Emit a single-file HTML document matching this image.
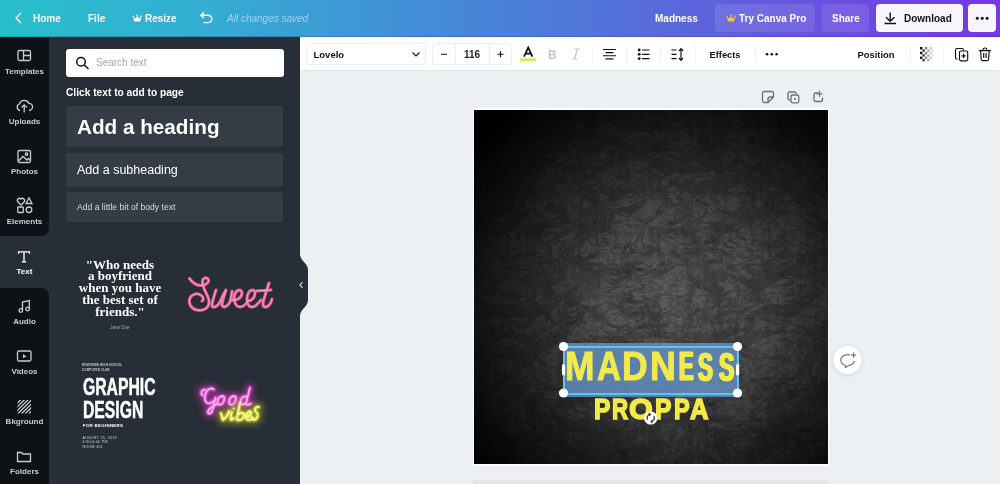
<!DOCTYPE html>
<html><head><meta charset="utf-8">
<style>
*{box-sizing:border-box;margin:0;padding:0}
html,body{width:1000px;height:484px;overflow:hidden;background:#ecf0f3;font-family:"Liberation Sans",sans-serif}
.a{position:absolute;white-space:nowrap}
svg{position:absolute;overflow:visible}
#top{position:absolute;left:0;top:0;width:1000px;height:37px;background:linear-gradient(90deg,#28bfcc 0%,#34aed3 20%,#4290d6 40%,#5273d9 60%,#6755df 80%,#7437e6 100%)}
#top .t{position:absolute;top:13px;font-size:10px;font-weight:bold;color:#fff;line-height:12px}
.btn{position:absolute;top:4px;height:28px;border-radius:4px}
#rail{position:absolute;left:0;top:37px;width:49px;height:447px;background:#0e1217}
.ri{position:absolute;left:0;width:49px;text-align:center;font-size:8px;font-weight:bold;color:#c9ccd0;line-height:9px}
#panel{position:absolute;left:49px;top:37px;width:251px;height:447px;background:#282e37}
#tb{position:absolute;left:300px;top:37px;width:700px;height:32.5px;background:#fff;box-shadow:0 0.5px 1px rgba(0,0,0,0.06)}
.tbt{position:absolute;top:12px;font-size:9.5px;font-weight:bold;color:#0e1318;line-height:12px}
.div{position:absolute;top:8px;width:1px;height:18px;background:#f0f1f3}
.lt{position:absolute;font-weight:bold;color:#f1ea4c;transform-origin:0 0;white-space:nowrap}
.card{position:absolute;left:66px;width:217px;background:#363c45;border-radius:3px}
</style></head><body>
<!-- TOP BAR -->
<div id="top">
  <svg style="left:0;top:0" width="1000" height="37">
    <path d="M21 13 L16 18 L21 23" fill="none" stroke="#fff" stroke-width="1.4"/>
    <path d="M134.2 21.5 L133.2 16.8 L135.6 18.6 L137.2 15.8 L138.8 18.6 L141.2 16.8 L140.2 21.5 Z" fill="#fff"/><circle cx="133.2" cy="16.4" r="0.8" fill="#fff"/><circle cx="137.2" cy="15.4" r="0.8" fill="#fff"/><circle cx="141.2" cy="16.4" r="0.8" fill="#fff"/>
    <path d="M204 12.2 L200.9 15.2 L204 18.2 M201.2 15.2 H207.8 A3.9 3.7 0 0 1 207.8 22.6 H203.6" fill="none" stroke="#fff" stroke-width="1.4"/>
    <path d="M728 21.5 L727 16.8 L729.4 18.6 L731 15.8 L732.6 18.6 L735 16.8 L734 21.5 Z" fill="#f6b93b"/><circle cx="727" cy="16.4" r="0.8" fill="#f6b93b"/><circle cx="731" cy="15.4" r="0.8" fill="#f6b93b"/><circle cx="735" cy="16.4" r="0.8" fill="#f6b93b"/>
    <path d="M890.2 12.5 L890.2 21 M886 17.3 L890.2 21.3 L894.4 17.3 M884.5 23.5 L896 23.5" fill="none" stroke="#0e1318" stroke-width="1.4"/>
    <circle cx="977.3" cy="18.2" r="1.5" fill="#0e1318"/><circle cx="982.2" cy="18.2" r="1.5" fill="#0e1318"/><circle cx="987.1" cy="18.2" r="1.5" fill="#0e1318"/>
  </svg>
  <span class="t" style="left:33px">Home</span>
  <span class="t" style="left:88px">File</span>
  <span class="t" style="left:145px">Resize</span>
  <span class="t" style="left:227px;font-style:italic;font-weight:normal;color:rgba(255,255,255,0.5)">All changes saved</span>
  <span class="t" style="left:655px">Madness</span>
  <div class="btn" style="left:715px;width:100px;background:rgba(255,255,255,0.1)"></div>
  <span class="t" style="left:739px">Try Canva Pro</span>
  <div class="btn" style="left:822px;width:47px;background:rgba(255,255,255,0.1)"></div>
  <span class="t" style="left:832px">Share</span>
  <div class="btn" style="left:876px;width:87px;background:#f8f6fc"></div>
  <span class="t" style="left:904px;color:#0e1318">Download</span>
  <div class="btn" style="left:968px;width:28px;background:#f8f6fc"></div>
  <svg style="left:0;top:0" width="1000" height="37">
    <path d="M890.2 12.5 L890.2 21 M886 17.3 L890.2 21.3 L894.4 17.3 M884.5 23.5 L896 23.5" fill="none" stroke="#0e1318" stroke-width="1.4"/>
    <circle cx="977.3" cy="18.2" r="1.5" fill="#0e1318"/><circle cx="982.2" cy="18.2" r="1.5" fill="#0e1318"/><circle cx="987.1" cy="18.2" r="1.5" fill="#0e1318"/>
  </svg>
</div>

<div style="position:absolute;left:0;top:36px;width:1000px;height:1px;background:rgba(20,10,60,0.18)"></div>
<!-- RAIL -->
<div id="rail">
  <div style="position:absolute;left:0;top:150px;width:49px;height:150px;background:#282e37"></div>
  <div style="position:absolute;left:0;top:150px;width:49px;height:49px;background:#0e1217;border-bottom-right-radius:8px"></div>
  <div style="position:absolute;left:0;top:251px;width:49px;height:49px;background:#0e1217;border-top-right-radius:8px"></div>
</div>
<div class="ri" style="top:67px">Templates</div>
<div class="ri" style="top:117px">Uploads</div>
<div class="ri" style="top:167px">Photos</div>
<div class="ri" style="top:217px">Elements</div>
<div class="ri" style="top:267px;color:#fff">Text</div>
<div class="ri" style="top:317px">Audio</div>
<div class="ri" style="top:367px">Videos</div>
<div class="ri" style="top:417px">Bkground</div>
<div class="ri" style="top:467px">Folders</div>
<svg style="left:0;top:0" width="49" height="484" fill="none" stroke="#c9ccd0" stroke-width="1.3">
  <!-- templates -->
  <rect x="18" y="50.5" width="12.5" height="10" rx="1.5"/>
  <path d="M23.5 50.5 V60.5 M23.5 55.5 H30.5"/>
  <!-- uploads -->
  <path d="M20 110.5 A3.5 3.5 0 0 1 19.5 103.8 A5 5 0 0 1 28.8 103.3 A3.5 3.5 0 0 1 29 110.5"/>
  <path d="M24.2 112.5 V105 M21.5 107.5 L24.2 104.8 L27 107.5"/>
  <!-- photos -->
  <rect x="18" y="150.5" width="12.5" height="12" rx="1.5"/>
  <path d="M18.5 161 L23 156.5 L27 160 L28.5 158.5 L30.5 160.5"/>
  <circle cx="26.5" cy="154.2" r="1.2"/>
  <!-- elements -->
  <path d="M21 205 L18 202 A2 2 0 0 1 21 199 A2 2 0 0 1 24 202 Z"/>
  <path d="M29 197.8 L32 203.5 L26 203.5 Z"/>
  <rect x="17.8" y="207" width="5.5" height="5.5" rx="0.5"/>
  <circle cx="29" cy="209.8" r="2.8"/>
  <!-- audio -->
  <path d="M22.5 310 V302 L29.3 300.5 V308.5"/>
  <circle cx="20.8" cy="310.5" r="1.8"/><circle cx="27.6" cy="309" r="1.8"/>
  <!-- videos -->
  <rect x="17.5" y="351" width="13.5" height="10" rx="1.5"/>
  <!-- folders -->
  <path d="M17.5 452.5 H21.5 L23 454 H30.5 V461.5 H17.5 Z"/>
</svg>
<svg style="left:0;top:0" width="49" height="484">
  <path d="M23 354.3 L26.5 356.3 L23 358.3 Z" fill="#c9ccd0"/>
  <!-- text T -->
  <path d="M18.6 253.8 V251.8 H29.4 V253.8 M24 251.8 V261.8 M21.8 261.8 H26.2" fill="none" stroke="#fff" stroke-width="1.3"/>
  <!-- bkground stripes -->
  <g stroke="#c9ccd0" stroke-width="1.3">
    <clipPath id="bk"><rect x="17.5" y="400" width="13.5" height="13.5"/></clipPath>
    <g clip-path="url(#bk)"><path d="M6.5 414 L21.5 399 M10.2 414 L25.2 399 M13.9 414 L28.9 399 M17.6 414 L32.6 399 M21.3 414 L36.3 399 M25.0 414 L40.0 399 M28.7 414 L43.7 399"/></g>
  </g>
</svg>

<!-- PANEL -->
<div id="panel"></div>
<div style="position:absolute;left:66px;top:49px;width:218px;height:28px;background:#fff;border-radius:3px"></div>
<svg style="left:0;top:0" width="300" height="100">
  <circle cx="81" cy="61.7" r="4.3" fill="none" stroke="#0e1318" stroke-width="1.5"/>
  <path d="M84.2 65 L88.5 69" stroke="#0e1318" stroke-width="1.6"/>
</svg>
<span class="a" style="left:96px;top:57px;font-size:10px;color:#a4a8ad;line-height:12px">Search text</span>
<span class="a" style="left:66px;top:87px;font-size:10.2px;font-weight:bold;color:#fff;line-height:12px">Click text to add to page</span>
<div class="card" style="top:106px;height:41px"></div>
<div class="card" style="top:153px;height:34px"></div>
<div class="card" style="top:192px;height:30px"></div>
<span class="a" style="left:77px;top:115px;font-size:20.7px;font-weight:bold;color:#fff;line-height:24px">Add a heading</span>
<span class="a" style="left:77px;top:162.5px;font-size:12.5px;color:#fff;line-height:15px">Add a subheading</span>
<span class="a" style="left:77px;top:202px;font-size:8.6px;color:#d8dadd;line-height:11px">Add a little bit of body text</span>

<!-- templates previews -->
<div class="a" style="left:60px;top:258.6px;width:120px;text-align:center;font-family:'Liberation Serif',serif;font-weight:bold;font-size:13px;line-height:11.8px;color:#fff">"Who needs<br>a boyfriend<br>when you have<br>the best set of<br>friends."</div>
<div class="a" style="left:60px;top:325px;width:120px;text-align:center;font-size:4.5px;color:#aab;line-height:6px">Jane Doe</div>

<!-- right templates -->
<svg style="left:0;top:0" width="300" height="484" fill="none" stroke-linecap="round" stroke-linejoin="round">
  <defs>
    <filter id="gl" x="-50%" y="-50%" width="200%" height="200%"><feGaussianBlur stdDeviation="3"/></filter>
    <filter id="gl2" x="-50%" y="-50%" width="200%" height="200%"><feGaussianBlur stdDeviation="1.2"/></filter>
    <path id="sw" d="M189.5 278.5 C192 282 196 285.5 201 285.5 C206 285.5 210 282 208 279 C206 276.5 202 278 202.5 283 C203 290 210 297 209 303 C208 309 203 311 197 310 C191 309 188 303 190 298 C192 294 198 292 202 296 C204 298 203 301 202 301 M216 290 C214 296 212 302 212 306 C213 309 218 306 220 302 C222 297 224 293 226 290 C224 296 222 302 222 305 C223 309 228 306 230 302 C231 298 232 294 232 291 M232 300 C236 301 242 298 242 293 C242 289 237 289 235 294 C233 299 235 307 240 307 C243 307 246 304 248 301 C251 301 255 298 255 293 C255 289 250 289 248 294 C246 299 247 307 252 307 C256 307 258 303 261 300 M269 283 C267 290 263 300 263 304 C263 308 267 308 270 304 C271 302 272 300 272 299 M256 291 L271 290"/>
    <path id="gd" d="M202.5 395.5 C200 393 201.5 389.5 205 389.5 M214 389.5 C210.5 386.5 206 390 205 396.5 C204 402.5 209 406 213.5 401 M215.5 397.5 L212.5 410 C211.5 414.5 207 415 208 411 C209 408 213 406 217.5 404 M224.5 397 C221 394.5 217.5 398 217.5 402 C217.5 405.5 222 405.5 223.5 402 C225 399 224.5 396.5 222.5 396 M236 397 C232.5 394.5 229 398 229 402 C229 405.5 233.5 405.5 235 402 C236.5 399 236 396.5 234 396 M247.5 397.5 C244 394.5 240.5 398 240.5 402 C240.5 405.5 245 405.5 246.5 401.5 L250 387.5 M246.5 401.5 C245.5 405 247 406 251 403.5"/>
    <path id="vb" d="M221 413 C222 416 222 419 223 420 C225 419 228 415 229 411 M232 412 C231 415 230 419 231 420 C232 420 233 419 234 418 M233.5 408.5 L233.6 408.6 M240 403 C239 408 237 415 237 420 C240 421 244 419 244 415 C244 412 240 412 238 415 M246 417 C249 417 252 414 251 412 C249 410 246 413 246 417 C246 421 250 421 253 418 M259 407 C255 406 254 410 256 412 C259 414 258 419 254 420 C252 420 251 418 252 417"/>
  </defs>
  <use href="#sw" stroke="#ec5f9c" stroke-width="3.1"/>
  <use href="#sw" stroke="#ffb5d6" stroke-width="1" opacity="0.75"/>
  <use href="#gd" stroke="#d030b8" stroke-width="8" filter="url(#gl)" opacity="0.6"/>
  <use href="#vb" stroke="#a8a820" stroke-width="9" filter="url(#gl)" opacity="0.6"/>
  <use href="#gd" stroke="#ff62e6" stroke-width="2.8" filter="url(#gl2)"/>
  <use href="#vb" stroke="#eef04a" stroke-width="2.8" filter="url(#gl2)"/>
  <use href="#gd" stroke="#ffb8f4" stroke-width="1.5"/>
  <use href="#vb" stroke="#fbfd9c" stroke-width="1.5"/>
</svg>
<!-- graphic design -->
<div class="a" style="left:82px;top:362.5px;font-size:3px;font-weight:bold;color:#c8cacd;line-height:5.2px;letter-spacing:0.1px">RIVERSIDE HIGH SCHOOL<br>COMPUTER CLUB</div>
<div class="a" style="left:82.5px;top:376.2px;font-size:23.3px;font-weight:bold;color:#fff;line-height:23.2px;transform:scaleX(0.675);transform-origin:0 0;-webkit-text-stroke:0.5px #fff">GRAPHIC<br>DESIGN</div>
<div class="a" style="left:82.8px;top:422.8px;font-size:4.4px;font-weight:bold;color:#fff;line-height:6px;letter-spacing:0.3px">FOR BEGINNERS</div>
<div class="a" style="left:82.5px;top:435.5px;font-size:3.6px;color:#d0d2d5;line-height:4.5px;letter-spacing:0.3px">AUGUST 25, 2019<br>4:30-6:00 PM<br>ROOM 301</div>
<!-- collapse handle -->
<svg style="left:0;top:0" width="320" height="484">
  <path d="M300 254 Q300 258 304 262 Q308 266 308 270 V300 Q308 304 304 308 Q300 312 300 316 Z" fill="#282e37"/>
  <path d="M302.5 282 L300 285 L302.5 288" fill="none" stroke="#e6e8ea" stroke-width="1.1"/>
</svg>

<!-- TOOLBAR -->
<div id="tb">
  <div style="position:absolute;left:6px;top:6px;width:120px;height:22px;border:1px solid #eceef1;border-radius:3px"></div>
  <span class="tbt" style="left:13.5px">Lovelo</span>
  <div style="position:absolute;left:132px;top:6px;width:80px;height:22px;border:1px solid #eceef1;border-radius:3px"></div>
  <div style="position:absolute;left:155px;top:6px;width:1px;height:22px;background:#eceef1"></div>
  <div style="position:absolute;left:189px;top:6px;width:1px;height:22px;background:#eceef1"></div>
  <span class="tbt" style="left:164px;top:11.5px;font-size:10px;font-weight:bold;color:#1c2126">116</span>
  <span class="tbt" style="left:409.5px;font-size:9.3px">Effects</span>
  <span class="tbt" style="left:557.5px;font-size:9.4px">Position</span>
  <div class="div" style="left:292px"></div>
  <div class="div" style="left:326px"></div>
  <div class="div" style="left:360px"></div>
  <div class="div" style="left:395px"></div>
  <div class="div" style="left:455px"></div>
  <div class="div" style="left:610px"></div>
  <div class="div" style="left:643px"></div>
</div>
<svg style="left:0;top:0" width="1000" height="80" fill="none" stroke="#0e1318" stroke-width="1.15">
  <path d="M412.5 52.5 L416 56 L419.5 52.5"/>
  <path d="M441 54.2 H447 M497.5 54.2 H503.5 M500.5 51.2 V57.2"/>
  <path d="M603 49.5 H616 M605.5 52.6 H613.5 M603 55.7 H616 M605.5 58.8 H613.5"/>
  <path d="M642 50 H649.5 M642 54.3 H649.5 M642 58.6 H649.5"/>
  <path d="M671.5 50 H676.5 M671.5 54.3 H676.5 M671.5 58.6 H676.5 M681 49 V60 M679 51 L681 48.7 L683 51 M679 58 L681 60.3 L683 58"/>
  <!-- duplicate -->
  <path d="M957.5 59 H957 A1.5 1.5 0 0 1 955.5 57.5 V50 A1.5 1.5 0 0 1 957 48.5 H962 A1.5 1.5 0 0 1 963.5 50 V50.5"/>
  <rect x="959.5" y="51" width="8.2" height="9.8" rx="1.5"/>
  <path d="M963.6 53.8 V58 M961.5 55.9 H965.7" stroke-width="1.3"/>
  <!-- trash -->
  <path d="M978.8 50.6 H991 M983 50.6 V49.8 A1.8 1.8 0 0 1 984.8 48 H985 A1.8 1.8 0 0 1 986.8 49.8 V50.6 M980.6 50.6 L981.2 59 A1.6 1.6 0 0 0 982.8 60.6 H987 A1.6 1.6 0 0 0 988.6 59 L989.2 50.6 M983.7 53 V58 M986.1 53 V58"/>
</svg>
<svg style="left:0;top:0" width="1000" height="80">
  <path d="M524 56.6 L528.2 47.6 L532.4 56.6 M525.5 53.6 H531" fill="none" stroke="#0e1318" stroke-width="1.8"/>
  <rect x="520" y="58.2" width="16" height="3.2" rx="1.4" fill="#e6e55a"/>
  <text x="548" y="59" font-family="Liberation Sans" font-weight="bold" font-size="12" fill="#c4c7cb">B</text>
  <path d="M574.5 49 H580 M572 59 H577.5 M577.3 49 L574.7 59" fill="none" stroke="#c4c7cb" stroke-width="1.2"/>
  <circle cx="639.2" cy="50" r="1.4" fill="#0e1318"/><circle cx="639.2" cy="54.3" r="1.4" fill="#0e1318"/><circle cx="639.2" cy="58.6" r="1.4" fill="#0e1318"/>
  <circle cx="767" cy="54.3" r="1.3" fill="#0e1318"/><circle cx="771.8" cy="54.3" r="1.3" fill="#0e1318"/><circle cx="776.6" cy="54.3" r="1.3" fill="#0e1318"/>
  <!-- checker -->
  <g fill="#0e1318">
    <rect x="920" y="47" width="2.4" height="2.4"/><rect x="924.8" y="47" width="2.4" height="2.4" opacity="0.5"/><rect x="929.6" y="47" width="2.4" height="2.4" opacity="0.2"/>
    <rect x="922.4" y="49.4" width="2.4" height="2.4" opacity="0.8"/><rect x="927.2" y="49.4" width="2.4" height="2.4" opacity="0.35"/><rect x="932" y="49.4" width="1.5" height="2.4" opacity="0.15"/>
    <rect x="920" y="51.8" width="2.4" height="2.4"/><rect x="924.8" y="51.8" width="2.4" height="2.4" opacity="0.5"/><rect x="929.6" y="51.8" width="2.4" height="2.4" opacity="0.2"/>
    <rect x="922.4" y="54.2" width="2.4" height="2.4" opacity="0.8"/><rect x="927.2" y="54.2" width="2.4" height="2.4" opacity="0.35"/><rect x="932" y="54.2" width="1.5" height="2.4" opacity="0.15"/>
    <rect x="920" y="56.6" width="2.4" height="2.4"/><rect x="924.8" y="56.6" width="2.4" height="2.4" opacity="0.5"/><rect x="929.6" y="56.6" width="2.4" height="2.4" opacity="0.2"/>
    <rect x="922.4" y="59" width="2.4" height="2.4" opacity="0.8"/><rect x="927.2" y="59" width="2.4" height="2.4" opacity="0.35"/>
  </g>
</svg>

<!-- CANVAS -->
<div style="position:absolute;left:473px;top:108px;width:356px;height:358px;background:#fff"></div>
<div style="position:absolute;left:473px;top:479.5px;width:356px;height:10px;background:#e3e6e9"></div>
<svg style="left:474px;top:110px" width="354" height="354">
  <defs>
    <radialGradient id="vmask" cx="0.57" cy="0.56" r="0.72">
      <stop offset="0" stop-color="#fff"/>
      <stop offset="0.35" stop-color="#d6d6d6"/>
      <stop offset="0.62" stop-color="#6c6c6c"/>
      <stop offset="0.85" stop-color="#222"/>
      <stop offset="1" stop-color="#000"/>
    </radialGradient>
    <filter id="tx" x="0" y="0" width="100%" height="100%">
      <feTurbulence type="turbulence" baseFrequency="0.008 0.012" numOctaves="6" seed="4"/>
      <feColorMatrix type="luminanceToAlpha"/>
      <feSpecularLighting lighting-color="#fff" surfaceScale="20" specularConstant="0.9" specularExponent="12"><feDistantLight azimuth="225" elevation="55"/></feSpecularLighting>
    </filter>
    <filter id="tx2" x="0" y="0" width="100%" height="100%">
      <feTurbulence type="fractalNoise" baseFrequency="0.015" numOctaves="6" seed="9"/>
      <feColorMatrix type="luminanceToAlpha"/>
      <feDiffuseLighting lighting-color="#fff" surfaceScale="14" diffuseConstant="1"><feDistantLight azimuth="135" elevation="45"/></feDiffuseLighting>
    </filter>
  </defs>
  <rect width="354" height="354" fill="#2e2e2e"/>
  <rect width="354" height="354" filter="url(#tx2)" style="mix-blend-mode:overlay" opacity="0.6"/>
  <rect width="354" height="354" filter="url(#tx)" style="mix-blend-mode:screen" opacity="0.16"/>
  <rect width="354" height="354" fill="url(#vmask)" style="mix-blend-mode:multiply"/>
</svg>
<!-- selection -->
<div style="position:absolute;left:564px;top:342.5px;width:173px;height:54px;background:rgba(102,152,212,0.74)"></div>
<div style="position:absolute;left:562.5px;top:345.5px;width:176px;height:49px;border:2px solid #5cc6ec"></div>
<div class="lt" style="left:564.81px;top:344.30px;font-size:40px;line-height:44.00px;-webkit-text-stroke:1.0px #f1ea4c;transform:scaleX(0.8828)">M</div>
<div class="lt" style="left:596.79px;top:344.30px;font-size:40px;line-height:44.00px;-webkit-text-stroke:1.0px #f1ea4c;transform:scaleX(0.8283)">A</div>
<div class="lt" style="left:622.41px;top:344.30px;font-size:40px;line-height:44.00px;-webkit-text-stroke:1.0px #f1ea4c;transform:scaleX(0.8863)">D</div>
<div class="lt" style="left:649.59px;top:344.30px;font-size:40px;line-height:44.00px;-webkit-text-stroke:1.0px #f1ea4c;transform:scaleX(0.8939)">N</div>
<div class="lt" style="left:679.29px;top:344.30px;font-size:40px;line-height:44px;-webkit-text-stroke:1px #f1ea4c;text-shadow:1.8px 0 0 #f1ea4c,-1.8px 0 0 #f1ea4c,0.9px 0 0 #f1ea4c,-0.9px 0 0 #f1ea4c;transform:scaleX(0.5448)">E</div>
<div class="lt" style="left:698.48px;top:344.50px;font-size:40px;line-height:44px;-webkit-text-stroke:1px #f1ea4c;text-shadow:1.8px 0 0 #f1ea4c,-1.8px 0 0 #f1ea4c,0.9px 0 0 #f1ea4c,-0.9px 0 0 #f1ea4c;transform:scaleX(0.5527)">S</div>
<div class="lt" style="left:719.29px;top:344.50px;font-size:40px;line-height:44px;-webkit-text-stroke:1px #f1ea4c;text-shadow:1.8px 0 0 #f1ea4c,-1.8px 0 0 #f1ea4c,0.9px 0 0 #f1ea4c,-0.9px 0 0 #f1ea4c;transform:scaleX(0.5709)">S</div>
<div class="lt" style="left:593.65px;top:393.05px;font-size:29.4px;line-height:32.34px;-webkit-text-stroke:1.6px #f1ea4c;transform:scaleX(0.834)">P</div>
<div class="lt" style="left:612.06px;top:393.05px;font-size:29.4px;line-height:32.34px;-webkit-text-stroke:1.6px #f1ea4c;transform:scaleX(0.76)">R</div>
<div class="lt" style="left:629.42px;top:393.30px;font-size:29.4px;line-height:32.34px;-webkit-text-stroke:1.6px #f1ea4c;transform:scaleX(1.035)">O</div>
<div class="lt" style="left:654.65px;top:393.05px;font-size:29.4px;line-height:32.34px;-webkit-text-stroke:1.6px #f1ea4c;transform:scaleX(0.834)">P</div>
<div class="lt" style="left:674.20px;top:393.05px;font-size:29.4px;line-height:32.34px;-webkit-text-stroke:1.6px #f1ea4c;transform:scaleX(0.8)">P</div>
<div class="lt" style="left:690.00px;top:393.05px;font-size:29.4px;line-height:32.34px;-webkit-text-stroke:1.6px #f1ea4c;transform:scaleX(0.871)">A</div>
<svg style="left:0;top:0" width="1000" height="484">
  <g fill="#fff">
    <circle cx="563.5" cy="346.5" r="4.6"/><circle cx="737.5" cy="346.5" r="4.6"/>
    <circle cx="563.5" cy="393" r="4.6"/><circle cx="737.5" cy="393" r="4.6"/>
    <rect x="562" y="364" width="3.2" height="11.5" rx="1.6"/><rect x="736" y="364" width="3.2" height="11.5" rx="1.6"/>
    <circle cx="650.7" cy="418" r="6.6"/>
  </g>
  <path d="M650.1 414.4 A3.6 3.6 0 0 0 647.6 419.8 M651.3 421.6 A3.6 3.6 0 0 0 653.8 416.2" fill="none" stroke="#333" stroke-width="1.3"/><path d="M648.8 413 L650.4 414.4 L648.8 415.9 M652.6 423 L651 421.6 L652.6 420.1" fill="none" stroke="#333" stroke-width="1.1"/>
  <!-- page icons -->
  <g fill="none" stroke="#6b7075" stroke-width="1.3" stroke-linejoin="round">
    <path d="M768 102.5 H764.5 A2 2 0 0 1 762.5 100.5 V93.5 A2 2 0 0 1 764.5 91.5 H771.5 A2 2 0 0 1 773.5 93.5 V97 Z M768 102.5 V99 A2 2 0 0 1 770 97 H773.5"/>
    <path d="M790.5 100 H789.5 A1.5 1.5 0 0 1 788 98.5 V93.5 A1.5 1.5 0 0 1 789.5 92 H794.5 A1.5 1.5 0 0 1 796 93.5 V94"/>
    <rect x="791" y="95" width="7.8" height="7.8" rx="1.5"/>
    <path d="M818 93 H815.5 A1.5 1.5 0 0 0 814 94.5 V100 A1.5 1.5 0 0 0 815.5 101.5 H821 A1.5 1.5 0 0 0 822.5 100 V97.5 M819.5 90.8 V96.8 M816.5 93.8 H822.5"/>
  </g>
  <circle cx="794.9" cy="98.9" r="1" fill="#6b7075"/>
  <!-- comment btn -->
  <circle cx="847.5" cy="360" r="14" fill="#fff" style="filter:drop-shadow(0 1px 2px rgba(0,0,0,0.12))"/>
  <path d="M850 354.9 A7 5.5 0 1 0 845.3 365.3 L845.5 367.6 L848.6 365.4 A7 5.5 0 0 0 854.4 360.8" fill="none" stroke="#707579" stroke-width="1.2" stroke-linejoin="round"/>
  <path d="M853.6 352.5 V357.7 M851 355.1 H856.2" fill="none" stroke="#707579" stroke-width="1.2"/>
</svg>

</body></html>
